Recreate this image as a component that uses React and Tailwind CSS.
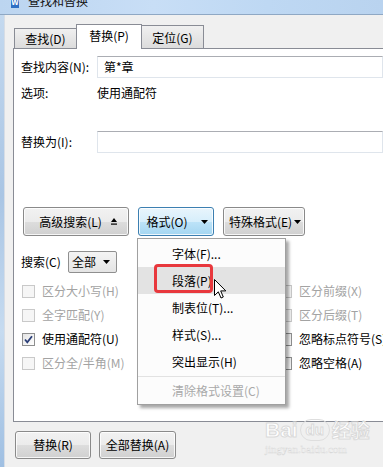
import React from "react";

const MENU_ITEMS = [
  { label: "字体(F)..." },
  { label: "段落(P)", active: true },
  { label: "制表位(T)..." },
  { label: "样式(S)..." },
  { label: "突出显示(H)" },
];

const LEFT_OPTIONS = [
  { label: "区分大小写(H)", disabled: true },
  { label: "全字匹配(Y)", disabled: true },
  { label: "使用通配符(U)", checked: true },
  { label: "区分全/半角(M)", disabled: true },
];

const RIGHT_OPTIONS = [
  { label: "区分前缀(X)", disabled: true },
  { label: "区分后缀(T)", disabled: true },
  { label: "忽略标点符号(S)" },
  { label: "忽略空格(A)" },
];

function Checkbox({ checked, disabled }) {
  return (
    <span
      className={
        "flex h-[13px] w-[13px] shrink-0 items-center justify-center border " +
        (disabled
          ? "border-[#c9c9c9] bg-[#f6f6f6]"
          : "border-[#8e8f8f] bg-[linear-gradient(135deg,#e4e4e4,#ffffff)]")
      }
    >
      {checked && (
        <svg width="11" height="11" viewBox="0 0 11 11">
          <path d="M2 5.5 L4.3 8.3 L9 2.2" fill="none" stroke="#2b3f78" strokeWidth="1.8" />
        </svg>
      )}
    </span>
  );
}

function Option({ label, checked, disabled }) {
  return (
    <div className="flex h-[24px] items-center gap-[7px] whitespace-nowrap">
      <Checkbox checked={checked} disabled={disabled} />
      <span className={disabled ? "text-[#a3a3a3]" : "text-black"}>{label}</span>
    </div>
  );
}

function DownArrow() {
  return (
    <svg width="7" height="4" viewBox="0 0 7 4">
      <path d="M0 0 H7 L3.5 4 Z" fill="#000" />
    </svg>
  );
}

function WinButton({ children, className = "", blue = false }) {
  return (
    <div
      className={
        "flex items-center justify-center whitespace-nowrap rounded-[3px] border shadow-[inset_0_0_0_1px_rgba(255,255,255,0.8)] " +
        (blue
          ? "border-[#3c7fb1] bg-[linear-gradient(#e9f5fc_0%,#d6eefb_50%,#bde3f8_51%,#a4d6f1_100%)] "
          : "border-[#8a8a8a] bg-[linear-gradient(#f2f2f2_0%,#ebebeb_50%,#dddddd_51%,#d0d0d0_100%)] ") +
        className
      }
    >
      {children}
    </div>
  );
}

function Tab({ label, selected, className = "" }) {
  return (
    <div
      className={
        "flex items-center justify-center border border-b-0 border-[#898c95] " +
        (selected
          ? "relative z-10 -mb-[1px] h-[25px] bg-white pb-[2px]"
          : "h-[21px] bg-[linear-gradient(#f0f0f0,#dcdcdc)] pt-[1px]") +
        " " +
        className
      }
    >
      {label}
    </div>
  );
}

export default function App() {
  return (
    <div className="relative h-[467px] w-[383px] overflow-hidden bg-[#f0f0f0] font-['Microsoft_YaHei','Noto_Sans_CJK_SC',sans-serif] text-[12px] leading-[16px] text-black">
      {/* title bar, cut off at the top */}
      <div className="flex h-[15px] items-start gap-[9px] overflow-hidden border-b border-[#8fa8c4] bg-[linear-gradient(90deg,#bcd5f0,#c8def6_40%,#bed8f3_70%,#b9d3ef)] pl-[11px]">
        <span className="-mt-[6px] flex h-[14px] w-[8px] items-end justify-center bg-[#2f6fc4] text-[8px] font-bold leading-[12px] text-white">
          W
        </span>
        <span className="-mt-[6px] text-[12px] leading-[14px] text-[#111]">查找和替换</span>
      </div>

      <div className="flex h-[452px]">
        <div className="w-[5px] border-r border-[#d7dde5] bg-[linear-gradient(#c4d9ef,#a9c5e4_40%,#c6dbf0_70%,#9fbfe2)]" />

        <div className="flex min-w-0 flex-1 flex-col pl-[8px] pt-[8px]">
          {/* tabs */}
          <div className="flex h-[25px] items-end pl-[1px]">
            <Tab label="查找(D)" className="w-[63px] !h-[20px]" />
            <Tab label="替换(P)" selected className="-ml-[1px] w-[66px]" />
            <Tab label="定位(G)" className="-ml-[1px] w-[63px] !h-[23px]" />
          </div>

          {/* panel */}
          <div className="flex h-[374px] flex-col overflow-hidden border-y border-l border-[#898c95] bg-white pl-[7px]">
            <div className="mt-[7px] flex h-[22px] items-center">
              <span className="w-[76px]">查找内容(N):</span>
              <div className="flex h-[22px] flex-1 items-center border border-[#dfe5ec] border-t-[#abadb3] pl-[6px]">
                第*章
              </div>
            </div>

            <div className="mt-[7px] flex h-[16px] items-center">
              <span className="w-[76px]">选项:</span>
              <span>使用通配符</span>
            </div>

            <div className="mt-[30px] flex h-[22px] items-center">
              <span className="w-[76px]">替换为(I):</span>
              <div className="h-[22px] flex-1 border border-[#dfe5ec] border-t-[#abadb3]" />
            </div>

            <div className="ml-[2px] mt-[54px] flex h-[29px] gap-[9px]">
              <WinButton className="w-[106px] gap-[9px] pl-[4px]">
                <span>高级搜索(L)</span>
                <svg width="6" height="7" viewBox="0 0 6 7">
                  <path d="M0 4 L3 0 L6 4 Z" fill="#000" />
                  <rect x="0" y="5.5" width="6" height="1.2" fill="#000" />
                </svg>
              </WinButton>
              <WinButton blue className="w-[76px] gap-[13px] pl-[2px]">
                <span>格式(O)</span>
                <DownArrow />
              </WinButton>
              <WinButton className="w-[82px] gap-[2px] pl-[2px]">
                <span>特殊格式(E)</span>
                <DownArrow />
              </WinButton>
            </div>

            <div className="mt-[15px] flex h-[22px] items-center">
              <span className="w-[47px]">搜索(C)</span>
              <div className="flex h-[22px] w-[49px] items-center justify-between rounded-[2px] border border-[#8f8f8f] bg-[linear-gradient(#f4f4f4,#e4e4e4)] pl-[3px] pr-[6px]">
                <span>全部</span>
                <DownArrow />
              </div>
            </div>

            <div className="ml-[1px] mt-[6px] flex">
              <div className="flex w-[257px] shrink-0 flex-col">
                {LEFT_OPTIONS.map((o) => (
                  <Option key={o.label} {...o} />
                ))}
              </div>
              <div className="flex shrink-0 flex-col">
                {RIGHT_OPTIONS.map((o) => (
                  <Option key={o.label} {...o} />
                ))}
              </div>
            </div>
          </div>

          {/* bottom buttons */}
          <div className="ml-[2px] mt-[9px] flex h-[28px] gap-[8px]">
            <WinButton className="w-[76px]">替换(R)</WinButton>
            <WinButton className="w-[77px]">全部替换(A)</WinButton>
          </div>
        </div>
      </div>

      {/* dropdown menu */}
      <div className="absolute left-[137px] top-[238px] flex h-[167px] w-[149px] flex-col border border-[#a0a0a0] bg-[#fcfcfc] pt-[1px] shadow-[3px_3px_3px_rgba(0,0,0,0.35)]">
        {MENU_ITEMS.map((item) => (
          <div
            key={item.label}
            className={
              "flex h-[27px] items-center pl-[34px] " + (item.active ? "bg-[#e3e3e3]" : "")
            }
          >
            {item.label}
          </div>
        ))}
        <div className="mt-[1px] h-[1px] bg-[#e2e2e2]" />
        <div className="flex h-[27px] items-center pl-[34px] text-[#a9a9a9]">清除格式设置(C)</div>
      </div>

      {/* red annotation box */}
      <div className="absolute left-[154px] top-[264px] h-[29px] w-[59px] rounded-[4px] border-[3px] border-[#e8383d]" />

      {/* mouse cursor */}
      <svg className="absolute left-[214px] top-[279px]" width="13" height="21" viewBox="0 0 13 21">
        <path
          d="M0.5 0.5 L0.5 16.5 L4.3 12.8 L7 19 L9.3 18 L6.7 11.9 L11.8 11.9 Z"
          fill="#fff"
          stroke="#000"
          strokeWidth="1"
          strokeLinejoin="round"
        />
      </svg>

      {/* watermark */}
      <div className="absolute left-[265px] top-[419px] flex flex-col items-start">
        <div className="flex items-center font-['Liberation_Sans',sans-serif] text-[21px] font-bold leading-[22px] text-white [-webkit-text-stroke:1px_#dadada]">
          <span>Bai</span>
          <span className="mx-[2px] flex h-[22px] w-[30px] items-center justify-center rounded-full border border-[#dedede] text-[15px]">
            du
          </span>
          <span className="font-['Noto_Sans_CJK_SC',sans-serif] text-[19px]">经验</span>
        </div>
        <span className="mt-[3px] font-['Liberation_Serif',serif] text-[11px] leading-[11px] text-white [-webkit-text-stroke:0.4px_#d6d6d6]">
          jingyan.baidu.com
        </span>
      </div>
    </div>
  );
}
